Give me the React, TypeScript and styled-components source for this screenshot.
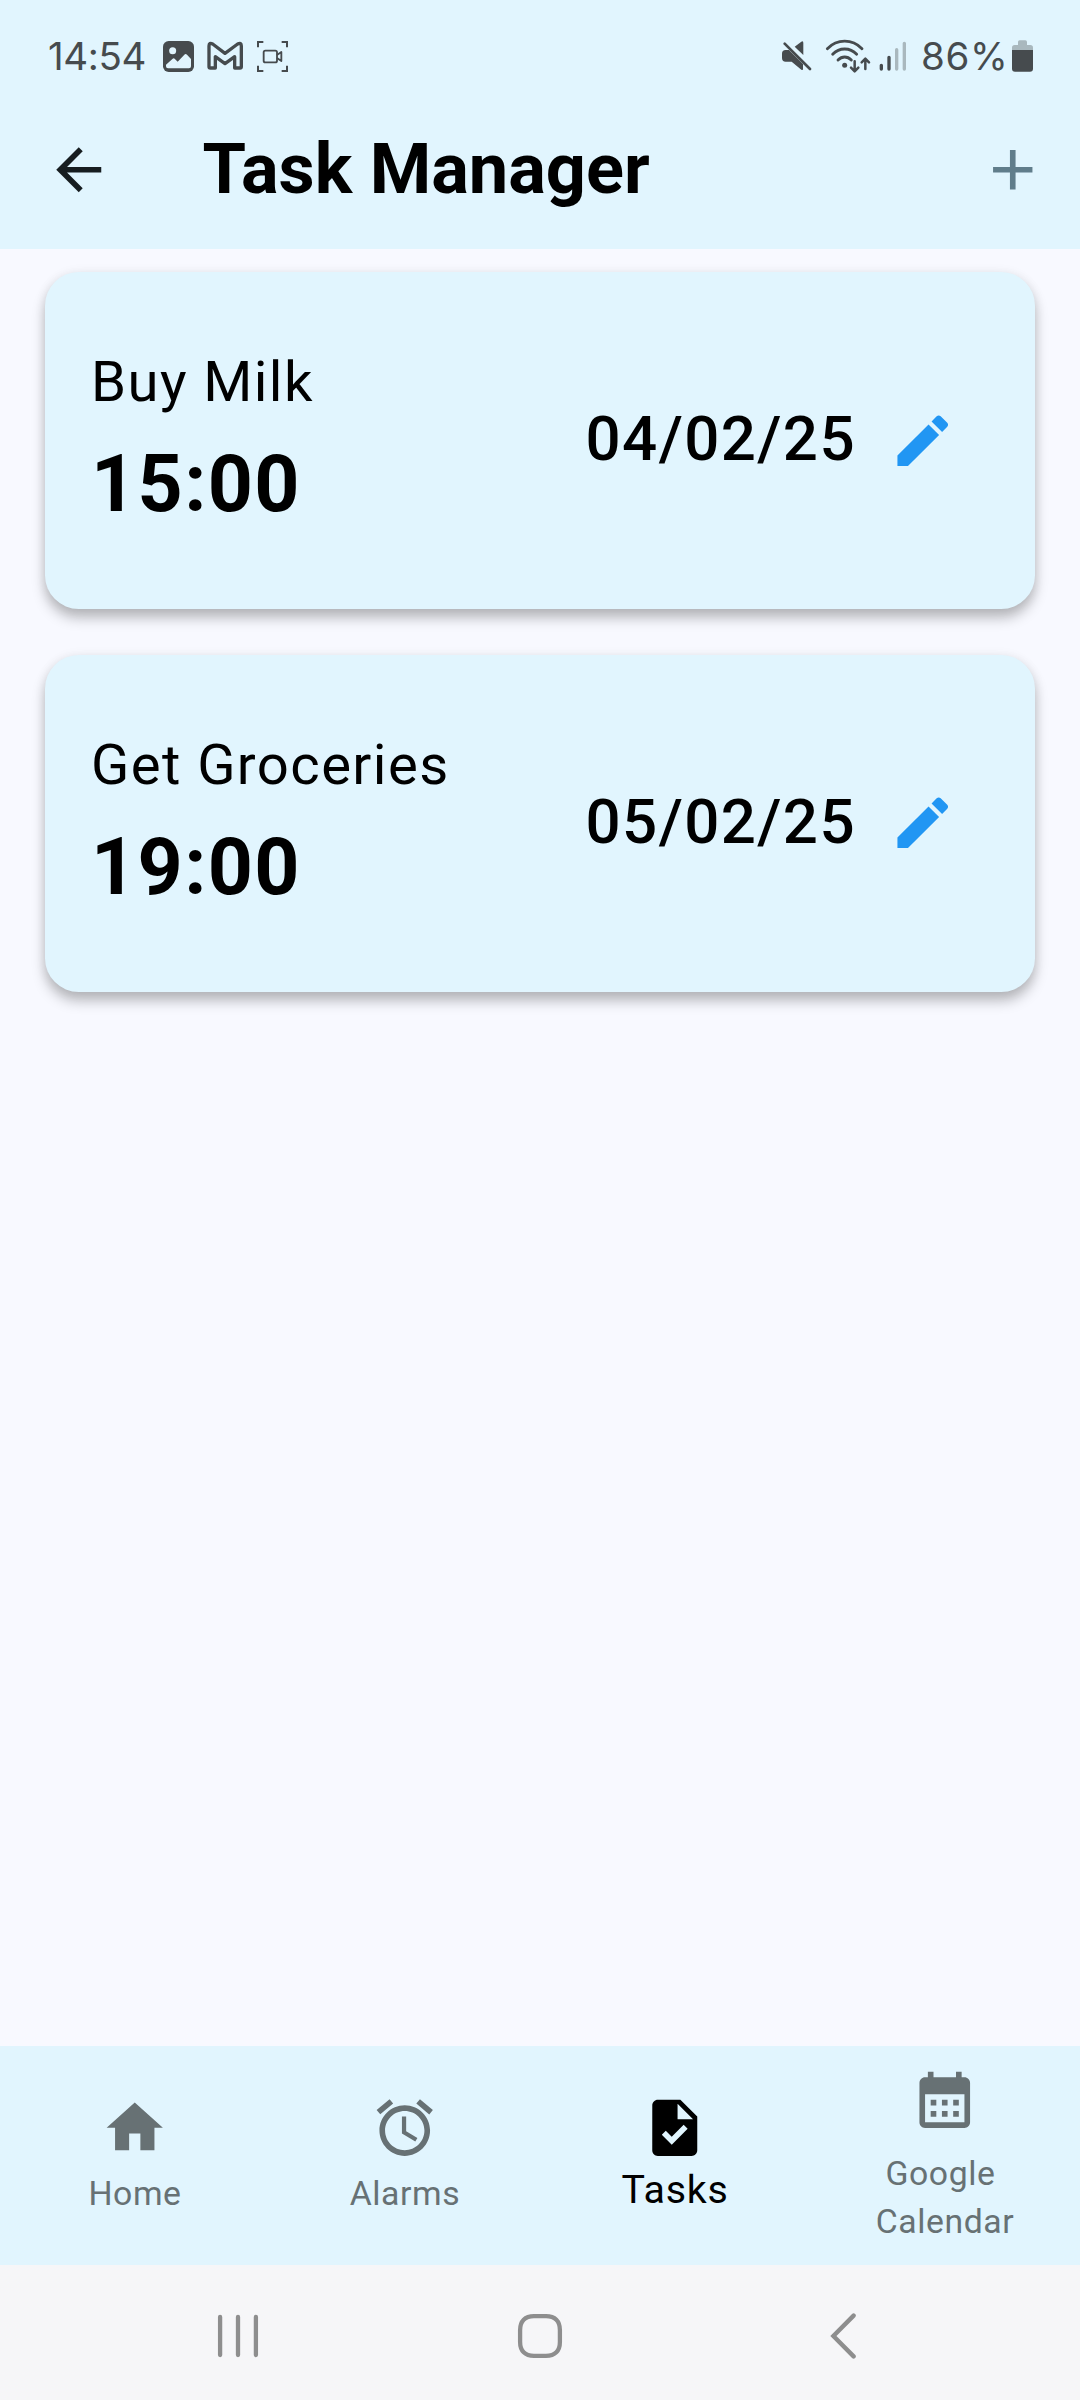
import React from "react";
import styled, { createGlobalStyle } from "styled-components";

const GlobalStyle = createGlobalStyle`
  *, *::before, *::after { box-sizing: border-box; }
  body { margin: 0; background: #f8f9ff; }
  svg { display: block; flex: none; }
`;

const Screen = styled.div`
  display: flex;
  flex-direction: column;
  width: 1080px;
  height: 2400px;
  overflow: hidden;
  background: #f8f9ff;
  color: #000;
  font-family: Roboto, "Liberation Sans", sans-serif;
`;

const StatusBar = styled.header`
  display: flex;
  align-items: center;
  justify-content: space-between;
  height: 92px;
  padding: 20px 47px 0 48px;
  background: #e1f5fe;
  color: #464b4e;
`;

const StatusGroup = styled.div`
  display: flex;
  align-items: center;
`;

const StatusText = styled.span<{ $width: number; $spacing: number }>`
  width: ${(p) => p.$width}px;
  font-family: Inter, Roboto, sans-serif;
  font-size: 38.5px;
  font-weight: 400;
  letter-spacing: ${(p) => p.$spacing}px;
  line-height: 46px;
  white-space: nowrap;
`;

const StatusIcon = styled.svg<{ $gap?: number }>`
  margin-left: ${(p) => p.$gap ?? 0}px;
`;

const AppBar = styled.div`
  display: flex;
  align-items: center;
  height: 157px;
  padding: 0 33.75px 0 45px;
  background: #e1f5fe;
`;

const Title = styled.h1`
  flex: 1;
  margin: 0 0 3px 90px;
  font-size: 70.3px;
  font-weight: 700;
  line-height: 84px;
`;

const PlainButton = styled.button`
  display: flex;
  align-items: center;
  justify-content: center;
  padding: 0;
  border: 0;
  background: none;
  color: inherit;
`;

const BackButton = styled(PlainButton)`
  padding-bottom: 1px;
  color: #171d20;
`;

const AddButton = styled(PlainButton)`
  padding-bottom: 1px;
  color: #607d8b;
`;

const TaskList = styled.main`
  display: flex;
  flex: 1;
  flex-direction: column;
  gap: 45.5px;
  padding: 23px 45px;
`;

const Card = styled.article`
  display: flex;
  align-items: center;
  height: 337px;
  padding: 0 45px;
  border-radius: 33.75px;
  background: #e1f5fe;
  box-shadow: 0 9px 13px rgba(0, 0, 0, 0.25), 0 1px 12px rgba(0, 0, 0, 0.07);
`;

const TaskInfo = styled.div`
  flex: 1;
  padding: 2.5px 0 0 1px;
  letter-spacing: 1.41px;
  line-height: 1.5;
`;

const TaskName = styled.div`
  font-size: 56.25px;
`;

const TaskTime = styled.div`
  margin-top: 1px;
  font-size: 78.75px;
  font-weight: 700;
`;

const TaskDate = styled.div`
  margin-right: -1px;
  padding-bottom: 2px;
  font-size: 61.875px;
  font-weight: 500;
  letter-spacing: 1.41px;
  line-height: 1.5;
`;

const EditButton = styled(PlainButton)`
  width: 135px;
  height: 135px;
  color: #2196f3;
`;

const TabBar = styled.nav`
  display: grid;
  grid-template-columns: repeat(4, 1fr);
  height: 219px;
  background: #e1f5fe;
`;

const Tab = styled.div<{ $active?: boolean; $gap: number }>`
  display: flex;
  flex-direction: column;
  align-items: center;
  justify-content: center;
  gap: ${(p) => p.$gap}px;
  color: ${(p) => (p.$active ? "#000" : "#677174")};
`;

const TabLabel = styled.span<{ $active?: boolean }>`
  margin-bottom: -1px;
  padding-top: 1px;
  font-size: ${(p) => (p.$active ? 39.375 : 33.75)}px;
  letter-spacing: ${(p) => (p.$active ? 0.7 : 0.6)}px;
  line-height: ${(p) => (p.$active ? 56.25 : 48.2)}px;
  text-align: center;
`;

const SystemNav = styled.footer`
  display: grid;
  grid-template-columns: repeat(3, 302.5px);
  justify-content: center;
  justify-items: center;
  align-items: center;
  height: 135px;
  padding-top: 7px;
  background: #f6f6f8;
`;

const MaterialIcon = ({ d }: { d: string }) => (
  <svg width="67.5" height="67.5" viewBox="0 0 24 24" fill="currentColor">
    <path d={d} />
  </svg>
);

const paths = {
  back: "M20 11H7.83l5.59-5.59L12 4l-8 8 8 8 1.41-1.41L7.83 13H20v-2z",
  add: "M19 13h-6v6h-2v-6H5v-2h6V5h2v6h6v2z",
  edit: "M3 17.25V21h3.75L17.81 9.94l-3.75-3.75L3 17.25zM20.71 7.04c.39-.39.39-1.02 0-1.41l-2.34-2.34c-.39-.39-1.02-.39-1.41 0l-1.83 1.83 3.75 3.75 1.83-1.83z",
  home: "M10 20v-6h4v6h5v-8h3L12 3 2 12h3v8z",
  alarm:
    "M22 5.72l-4.6-3.86-1.29 1.53 4.6 3.86L22 5.72zM7.88 3.39L6.6 1.86 2 5.71l1.29 1.53 4.59-3.85zM12.5 8H11v6l4.75 2.85.75-1.23-4-2.37V8zM12 4c-4.97 0-9 4.03-9 9s4.02 9 9 9c4.97 0 9-4.03 9-9s-4.03-9-9-9zm0 16c-3.87 0-7-3.13-7-7s3.13-7 7-7 7 3.13 7 7-3.13 7-7 7z",
  task: "M14 2H6c-1.1 0-1.99.9-1.99 2L4 20c0 1.1.89 2 1.99 2H18c1.1 0 2-.9 2-2V8l-6-6zm-3.06 16L7.4 14.46l1.41-1.41 2.12 2.12 4.24-4.24 1.41 1.41L10.94 18zM13 9V3.5L18.5 9H13z",
  calendar:
    "M19 4h-1V2h-2v2H8V2H6v2H5c-1.11 0-1.99.9-1.99 2L3 20c0 1.1.89 2 2 2h14c1.1 0 2-.9 2-2V6c0-1.1-.9-2-2-2zm0 16H5V10h14v10zM9 14H7v-2h2v2zm4 0h-2v-2h2v2zm4 0h-2v-2h2v2zm-8 4H7v-2h2v2zm4 0h-2v-2h2v2zm4 0h-2v-2h2v2z",
};

const PictureIcon = () => (
  <StatusIcon width="31" height="31" viewBox="489 123 93 93">
    <rect x="489" y="123" width="93" height="93" rx="17" fill="#464b4e" />
    <circle cx="518" cy="152" r="10.5" fill="#e1f5fe" />
    <path
      d="M498 194L518 176Q521 173 524 176L533 185L553 164Q557 160 561 164L573 177V199Q573 205 567 205H504Q498 205 498 199Z"
      fill="#e1f5fe"
    />
  </StatusIcon>
);

const MailIcon = () => (
  <StatusIcon $gap={13} width="36" height="31" viewBox="622 123 108 93">
    <path
      d="M628 200V138Q628 126 639 132L676 160L714 132Q725 126 725 138V200Q725 204 721 204H705V170L676 191L647 170V204H632Q628 204 628 200Z"
      fill="none"
      stroke="currentColor"
      strokeWidth="10"
      strokeLinejoin="round"
    />
  </StatusIcon>
);

const RecordIcon = () => (
  <StatusIcon $gap={13.5} width="31" height="31" viewBox="771 123 93 93">
    <g fill="none" stroke="currentColor" strokeWidth="6">
      <path d="M774 142V126H790M845 126H861V142M861 197V213H845M790 213H774V197" />
      <rect x="791" y="152" width="40" height="35" rx="5" strokeWidth="5.5" />
      <path d="M831 165L844 156V183L831 174" strokeWidth="5.5" strokeLinejoin="round" />
    </g>
  </StatusIcon>
);

const MuteIcon = () => (
  <StatusIcon width="30" height="31" viewBox="126 123 90 93">
    <path
      d="M137 150H147L189 192V207Q189 212 184 209L155 185H137Q126 185 126 174V161Q126 150 137 150Z"
      fill="currentColor"
    />
    <path d="M164 140L184 125Q190 122 190 129V165Z" fill="currentColor" />
    <path d="M134 131L210 207" stroke="currentColor" strokeWidth="8" strokeLinecap="round" />
  </StatusIcon>
);

const WifiIcon = () => (
  <StatusIcon $gap={13} width="47" height="35" viewBox="255 115 141 105">
    <g fill="none" stroke="currentColor" strokeWidth="8.5" strokeLinecap="round" strokeLinejoin="round">
      <path d="M262 144Q284 121.5 314 121.5Q344 121.5 366 144" />
      <path d="M278 161Q293 145 314 145Q335 145 350 161" />
      <path d="M294 178Q303 169 314 169Q325 169 334 178" />
      <path d="M344 182V211M333 201L344 212L355 201" strokeWidth="7.5" />
      <path d="M376 205V175M365 185L376 174L387 185" strokeWidth="7.5" />
    </g>
    <circle cx="314" cy="194" r="7.5" fill="currentColor" />
  </StatusIcon>
);

const SignalIcon = () => (
  <StatusIcon $gap={7} width="28" height="31" viewBox="419 121 84 93">
    <g strokeWidth="10" strokeLinecap="round">
      <path d="M426 194V205M449 170V205" stroke="currentColor" />
      <path d="M472 147V205M495 128V205" stroke="#a9b8be" />
    </g>
  </StatusIcon>
);

const BatteryIcon = () => (
  <StatusIcon width="21" height="32" viewBox="816 120 63 96">
    <path
      d="M816 150V143Q816 135 824 135H834V126Q834 121 839 121H856Q861 121 861 126V135H871Q879 135 879 143V150Z"
      fill="#a9b8be"
    />
    <path d="M816 150H879V206Q879 215 870 215H825Q816 215 816 206Z" fill="currentColor" />
  </StatusIcon>
);

const tasks = [
  { name: "Buy Milk", time: "15:00", date: "04/02/25" },
  { name: "Get Groceries", time: "19:00", date: "05/02/25" },
];

export default function App() {
  return (
    <>
      <GlobalStyle />
      <Screen>
        <StatusBar>
          <StatusGroup>
            <StatusText $width={115} $spacing={-0.4}>
              14:54
            </StatusText>
            <PictureIcon />
            <MailIcon />
            <RecordIcon />
          </StatusGroup>
          <StatusGroup>
            <MuteIcon />
            <WifiIcon />
            <SignalIcon />
            <StatusIcon width="14" height="1" />
            <StatusText $width={91} $spacing={0.6}>
              86%
            </StatusText>
            <BatteryIcon />
          </StatusGroup>
        </StatusBar>

        <AppBar>
          <BackButton aria-label="Back">
            <MaterialIcon d={paths.back} />
          </BackButton>
          <Title>Task Manager</Title>
          <AddButton aria-label="Add task">
            <MaterialIcon d={paths.add} />
          </AddButton>
        </AppBar>

        <TaskList>
          {tasks.map((task) => (
            <Card key={task.name}>
              <TaskInfo>
                <TaskName>{task.name}</TaskName>
                <TaskTime>{task.time}</TaskTime>
              </TaskInfo>
              <TaskDate>{task.date}</TaskDate>
              <EditButton aria-label="Edit task">
                <MaterialIcon d={paths.edit} />
              </EditButton>
            </Card>
          ))}
        </TaskList>

        <TabBar>
          <Tab $gap={8}>
            <MaterialIcon d={paths.home} />
            <TabLabel>Home</TabLabel>
          </Tab>
          <Tab $gap={8}>
            <MaterialIcon d={paths.alarm} />
            <TabLabel>Alarms</TabLabel>
          </Tab>
          <Tab $gap={0} $active>
            <MaterialIcon d={paths.task} />
            <TabLabel $active>Tasks</TabLabel>
          </Tab>
          <Tab $gap={16}>
            <MaterialIcon d={paths.calendar} />
            <TabLabel>
              Google&nbsp;
              <br />
              Calendar
            </TabLabel>
          </Tab>
        </TabBar>

        <SystemNav>
          <svg width="44" height="46" viewBox="0 0 44 46" stroke="#8e8e8e" strokeWidth="4.3" strokeLinecap="round">
            <path d="M4.1 4V42M22 4V42M39.9 4V42" />
          </svg>
          <svg width="46" height="46" viewBox="0 0 46 46" fill="none" stroke="#8e8e8e" strokeWidth="4.3">
            <path d="M17 3.1H29C38 3.1 42.9 8 42.9 17V29C42.9 38 38 42.9 29 42.9H17C8 42.9 3.1 38 3.1 29V17C3.1 8 8 3.1 17 3.1Z" />
          </svg>
          <svg
            width="28"
            height="46"
            viewBox="0 0 28 46"
            fill="none"
            stroke="#8e8e8e"
            strokeWidth="4.4"
            strokeLinecap="round"
            strokeLinejoin="miter"
          >
            <path d="M24.6 2.6L4.4 23L24.6 43.4" />
          </svg>
        </SystemNav>
      </Screen>
    </>
  );
}
